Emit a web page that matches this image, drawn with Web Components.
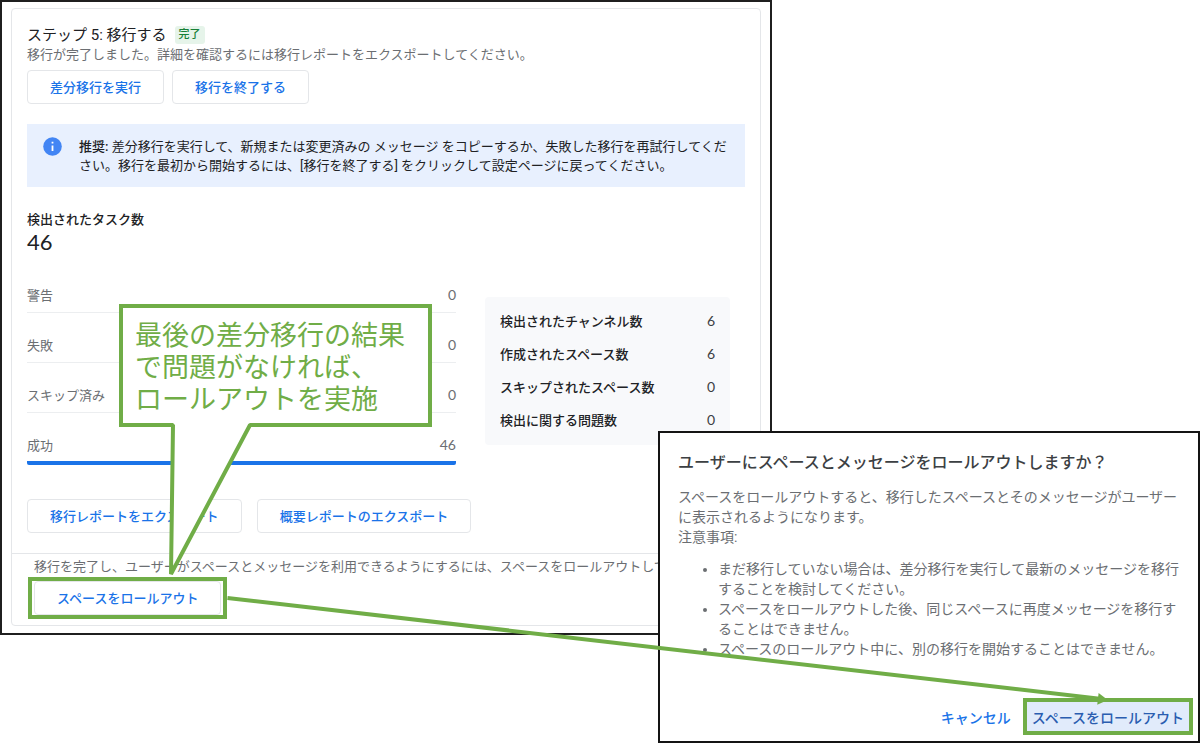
<!DOCTYPE html>
<html lang="ja">
<head>
<meta charset="utf-8">
<meta name="viewport" content="width=device-width, initial-scale=1">
<title>移行とロールアウト</title>
<style>
  html, body { margin: 0; background: #fff; }
  body {
    font-family: Roboto, "Noto Sans CJK JP", sans-serif;
    font-size: 13px;
    line-height: 20px;
    color: #202124;
    --blue: #1a73e8;
    --muted: #6b6e72;
    --line: #e4e6e9;
    --green: #70ad47;
  }
</style>
</head>
<body>
<guide-stage>
  <migration-panel slot="panel">
    <status-heading slot="heading" status="完了">ステップ 5: 移行する</status-heading>
    <span slot="summary">移行が完了しました。詳細を確認するには移行レポートをエクスポートしてください。</span>
    <action-button slot="actions">差分移行を実行</action-button>
    <action-button slot="actions">移行を終了する</action-button>
    <info-banner slot="banner"><span slot="label">推奨:</span> 差分移行を実行して、新規または変更済みの メッセージ をコピーするか、失敗した移行を再試行してください。移行を最初から開始するには、[移行を終了する] をクリックして設定ページに戻ってください。</info-banner>
    <task-total slot="total" value="46">検出されたタスク数</task-total>
    <metric-table slot="progress" kind="progress" rows="警告=0,失敗=0,スキップ済み=0,成功=46"></metric-table>
    <metric-table slot="counts" kind="counts" rows="検出されたチャンネル数=6,作成されたスペース数=6,スキップされたスペース数=0,検出に関する問題数=0"></metric-table>
    <action-button slot="reports">移行レポートをエクスポート</action-button>
    <action-button slot="reports">概要レポートのエクスポート</action-button>
    <span slot="note">移行を完了し、ユーザーがスペースとメッセージを利用できるようにするには、スペースをロールアウトして</span>
    <highlight-frame slot="rollout" id="rollout-start"><action-button>スペースをロールアウト</action-button></highlight-frame>
  </migration-panel>

  <rollout-dialog slot="dialog">
    <span slot="title">ユーザーにスペースとメッセージをロールアウトしますか？</span>
    <action-button slot="actions" kind="text">キャンセル</action-button>
    <highlight-frame slot="actions" id="rollout-confirm" flush><action-button kind="tonal">スペースをロールアウト</action-button></highlight-frame>
  </rollout-dialog>

  <callout-note slot="notes">最後の差分移行の結果<br>で問題がなければ、<br>ロールアウトを実施</callout-note>
  <link-arrow slot="notes" from="rollout-start" to="rollout-confirm"></link-arrow>
</guide-stage>

<script>
const define = (name, html, setup) => {
  const template = document.createElement('template');
  template.innerHTML = html;
  customElements.define(name, class extends HTMLElement {
    constructor() {
      super();
      this.attachShadow({ mode: 'open' }).append(template.content.cloneNode(true));
    }
    connectedCallback() { if (setup) setup(this, this.shadowRoot); }
  });
};

define('guide-stage', `
<style>
  :host { display: grid; position: relative; grid-template-columns: 658fr 114fr 428fr; align-items: start; overflow: hidden; }
  .panel { grid-area: 1 / 1 / 2 / 3; min-width: 0; }
  .dialog { grid-area: 1 / 2 / 2 / 4; min-width: 0; margin-top: 431px; position: relative; }
</style>
<div class="panel"><slot name="panel"></slot></div>
<div class="dialog"><slot name="dialog"></slot></div>
<slot name="notes"></slot>`);

define('migration-panel', `
<style>
  :host { display: block; border: 2px solid #1f1f1f; padding: 6px 9px 7px; background: #fff; }
  section { border: 1px solid var(--line); border-radius: 4px; }
  .main { padding: 16px 15px 20px; }
  .summary { color: var(--muted); }
  .actions { display: flex; gap: 8px; margin: 5px 0 20px; }
  .total { margin: 23px 0 9px; }
  .metrics { display: grid; grid-template-columns: 429fr 245fr; gap: 29px; padding-right: 15px; align-items: start; }
  .counts { margin-top: 34px; }
  .reports { display: flex; gap: 15px; margin-top: 34px; }
  footer { border-top: 1px solid var(--line); padding: 3px 16px 6px; }
  .note { padding-left: 6px; color: var(--muted); white-space: nowrap; overflow: hidden; }
</style>
<section>
  <div class="main">
    <slot name="heading"></slot>
    <div class="summary"><slot name="summary"></slot></div>
    <div class="actions"><slot name="actions"></slot></div>
    <slot name="banner"></slot>
    <div class="total"><slot name="total"></slot></div>
    <div class="metrics">
      <slot name="progress"></slot>
      <div class="counts"><slot name="counts"></slot></div>
    </div>
    <div class="reports"><slot name="reports"></slot></div>
  </div>
  <footer>
    <div class="note"><slot name="note"></slot></div>
    <slot name="rollout"></slot>
  </footer>
</section>`);

define('status-heading', `
<style>
  :host { display: flex; align-items: center; gap: 8px; height: 20px; }
  h2 { margin: 0; font-size: 15px; font-weight: 400; line-height: 20px; }
  .badge { padding: 0 4px; border-radius: 3px; background: #e6f4ea; color: #188038; font-size: 11px; line-height: 18px; font-weight: 500; }
</style>
<h2><slot></slot></h2><span class="badge"></span>`,
(host, root) => { root.querySelector('.badge').textContent = host.getAttribute('status'); });

define('action-button', `
<style>
  :host { display: block; }
  button {
    display: block; box-sizing: border-box; height: 34px; padding: 2px 22px 0; margin: 0;
    border: 1px solid var(--line); border-radius: 4px; background: #fff; color: var(--blue);
    font: inherit; font-size: 13px; font-weight: 500; line-height: 20px; white-space: nowrap; cursor: pointer;
  }
  :host([kind="text"]) button, :host([kind="tonal"]) button { border: 0; border-radius: 0; height: 29px; font-size: 14px; }
  :host([kind="text"]) button { padding: 2px 12px 0; }
  :host([kind="tonal"]) button { padding: 2px 5px 0; background: #e1ebfb; color: #2a5db0; }
</style>
<button type="button"><slot></slot></button>`);

define('info-banner', `
<style>
  :host { display: flex; gap: 17px; padding: 13px 16px 12px; background: #e8f0fe; line-height: 19px; }
  svg { flex: none; display: block; width: 19px; height: 19px; }
  p { margin: 0; }
  b { font-weight: 500; }
</style>
<svg viewBox="0 0 19 19" aria-hidden="true"><circle cx="9.5" cy="9.5" r="9.3" fill="#4285f4"/><path d="M8.6 4.8h1.8v1.8H8.6zM8.6 8.4h1.8v5.6H8.6z" fill="#fff"/></svg>
<p><b><slot name="label"></slot></b><slot></slot></p>`);

define('task-total', `
<style>
  :host { display: block; }
  h3 { margin: 0; font-size: 13px; font-weight: 500; line-height: 20px; }
  output { display: block; font-family: Lato, sans-serif; font-size: 22px; line-height: 24px; }
</style>
<h3><slot></slot></h3><output></output>`,
(host, root) => { root.querySelector('output').textContent = host.getAttribute('value'); });

define('metric-table', `
<style>
  :host { display: block; }
  table { width: 100%; border-spacing: 0; }
  th, td { padding: 0; font-weight: 400; text-align: left; line-height: 20px; }
  td { text-align: right; font-family: Lato, sans-serif; font-size: 14px; line-height: 18px; }
  :host([kind="progress"]) { color: var(--muted); }
  :host([kind="progress"]) :is(th, td) { padding: 23px 0 6px; border-bottom: 1px solid #eceef0; vertical-align: top; }
  :host([kind="progress"]) tr:last-child :is(th, td) { padding-bottom: 5px; border-bottom: 4px solid var(--blue); }
  :host([kind="progress"]) tr:last-child th { border-bottom-left-radius: 2px; }
  :host([kind="progress"]) tr:last-child td { border-bottom-right-radius: 2px; }
  :host([kind="counts"]) { padding: 8px 15px; border-radius: 4px; background: #f8f9fb; }
  :host([kind="counts"]) :is(th, td) { height: 33px; }
  :host([kind="counts"]) th { font-weight: 500; }
  :host([kind="counts"]) td { box-sizing: border-box; padding-bottom: 2px; color: #3c4043; }
</style>
<table><tbody></tbody></table>`,
(host, root) => {
  root.querySelector('tbody').replaceChildren(...host.getAttribute('rows').split(',').map(row => {
    const [label, value] = row.split('=');
    const tr = document.createElement('tr');
    const th = document.createElement('th');
    th.scope = 'row';
    th.textContent = label;
    tr.append(th);
    tr.insertCell().textContent = value;
    return tr;
  }));
});

define('highlight-frame', `
<style>
  :host { display: block; box-sizing: border-box; width: fit-content; padding: 0 2px; border: 4px solid var(--green); background: #fff; }
  :host([flush]) { padding: 0; }
</style>
<slot></slot>`);

define('rollout-dialog', `
<style>
  :host { display: block; border: 2px solid #141414; background: #fff; padding: 18px 5px 6px 18px; }
  h2 { margin: 0 0 12px; font-size: 16px; line-height: 24px; font-weight: 500; color: #3c4043; white-space: nowrap; }
  .body { margin-right: 7px; font-size: 14px; line-height: 20px; color: var(--muted); }
  p { margin: 0; }
  ul { margin: 12px 0 39px; padding-left: 40px; }
  .actions { display: flex; justify-content: flex-end; align-items: center; }
</style>
<div role="dialog" aria-labelledby="title">
  <h2 id="title"><slot name="title"></slot></h2>
  <div class="body">
    <p>スペースをロールアウトすると、移行したスペースとそのメッセージがユーザーに表示されるようになります。</p>
    <p>注意事項:</p>
    <ul>
      <li>まだ移行していない場合は、差分移行を実行して最新のメッセージを移行することを検討してください。</li>
      <li>スペースをロールアウトした後、同じスペースに再度メッセージを移行することはできません。</li>
      <li>スペースのロールアウト中に、別の移行を開始することはできません。</li>
    </ul>
  </div>
  <div class="actions"><slot name="actions"></slot></div>
</div>`);

define('callout-note', `
<style>
  :host {
    position: absolute; left: 119px; top: 304px; box-sizing: border-box; width: 313px;
    padding: 10px 12px 9px; border: 4px solid var(--green); background: #fff; color: var(--green);
    font-family: "Noto Sans CJK JP", sans-serif; font-weight: 400; font-size: 27px; line-height: 32px; white-space: nowrap;
  }
  svg { position: absolute; left: 46px; top: 100%; margin-top: -1px; display: block; overflow: visible; }
</style>
<slot></slot>
<svg width="84" height="160" aria-hidden="true"><path d="M4 0V3L2 148 81 3V0z" fill="#fff"/><path d="M0 3H4L2 152 81 3H86" fill="none" stroke="#70ad47" stroke-width="4" stroke-linejoin="bevel"/></svg>`);

define('link-arrow', `
<style>
  :host { position: absolute; inset: 0; pointer-events: none; }
  svg { display: block; width: 100%; height: 100%; }
</style>
<svg aria-hidden="true"><line stroke="#70ad47" stroke-width="4"/><path d="M0 0L-10-6V6z" fill="#70ad47"/></svg>`,
(host, root) => {
  const from = document.getElementById(host.getAttribute('from'));
  const to = document.getElementById(host.getAttribute('to'));
  const draw = () => {
    const origin = host.getBoundingClientRect();
    const a = from.getBoundingClientRect();
    const b = to.getBoundingClientRect();
    const x1 = a.right - origin.left, y1 = a.top + a.height / 2 - origin.top;
    const x2 = b.left + b.width / 2 - origin.left, y2 = b.top + 2 - origin.top;
    const line = root.querySelector('line');
    Object.entries({ x1, y1, x2: x2 - 6, y2: y2 - 1 }).forEach(([k, v]) => line.setAttribute(k, v));
    const angle = Math.atan2(y2 - y1, x2 - x1) * 180 / Math.PI;
    root.querySelector('path').setAttribute('transform', `translate(${x2} ${y2}) rotate(${angle})`);
  };
  new ResizeObserver(draw).observe(host);
  draw();
});
</script>
</body>
</html>
